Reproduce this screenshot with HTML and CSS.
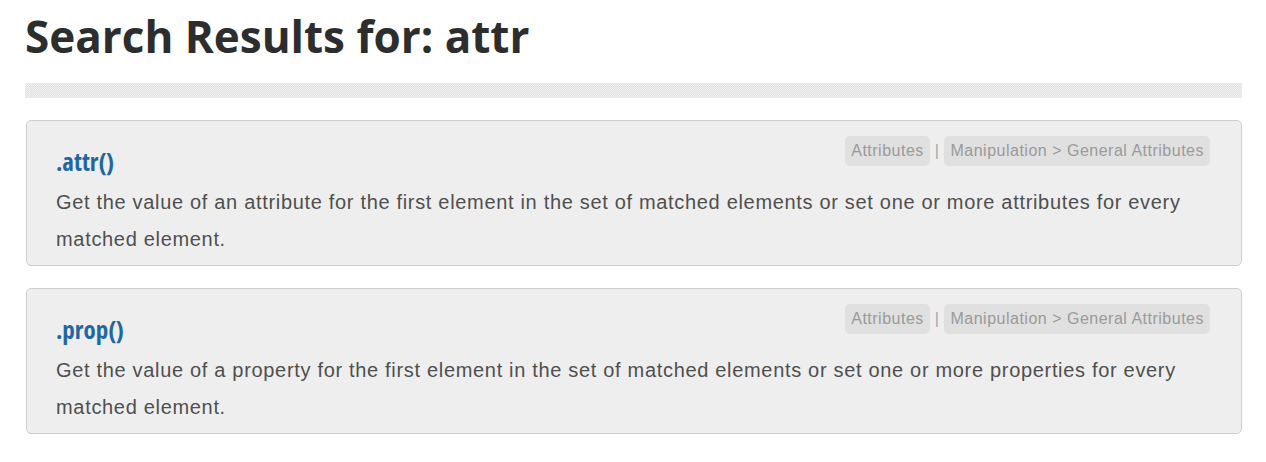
FILE: index.html
```html
<!DOCTYPE html>
<html>
<head>
<meta charset="utf-8">
<link rel="stylesheet" href="styles.css">
</head>
<body>
<div class="page">
  <h1 class="page-title">Search Results for: attr</h1>
  <div class="stripe"></div>
  <article class="entry">
    <div class="entry-head">
      <h2 class="entry-title"><a href="#">.attr()</a></h2>
      <div class="tags">
        <span class="tag">Attributes</span>
        <span class="sep">|</span>
        <span class="tag">Manipulation &gt; General Attributes</span>
      </div>
    </div>
    <p class="entry-desc">Get the value of an attribute for the first element in the set of matched elements or set one or more attributes for every matched element.</p>
  </article>
  <article class="entry">
    <div class="entry-head">
      <h2 class="entry-title"><a href="#">.prop()</a></h2>
      <div class="tags">
        <span class="tag">Attributes</span>
        <span class="sep">|</span>
        <span class="tag">Manipulation &gt; General Attributes</span>
      </div>
    </div>
    <p class="entry-desc">Get the value of a property for the first element in the set of matched elements or set one or more properties for every matched element.</p>
  </article>
</div>
</body>
</html>
```
FILE: styles.css
```css
html, body {
  margin: 0;
  padding: 0;
  background: #fff;
}
.page {
  padding: 10px 24px 0 25px;
  font-family: "Liberation Sans", Arial, sans-serif;
}
.page-title {
  margin: 0;
  font-family: "Open Sans", sans-serif;
  font-stretch: 96%;
  font-weight: 700;
  font-size: 44px;
  line-height: 52px;
  color: #2d2d2d;
}
.stripe {
  margin-top: 21px;
  height: 15px;
  background: repeating-conic-gradient(#e0e0e0 0 25%, #f2f2f2 0 50%) 0 0 / 2px 2px;
}
.entry {
  margin: 22px 0 0 1px;
  background: #eeeeee;
  border: 1px solid #cfcfcf;
  border-radius: 5px;
  padding: 15px 31px 7px 29px;
}
.entry + .entry {
  margin-top: 22px;
}
.entry-head {
  display: flex;
  justify-content: space-between;
  align-items: flex-start;
}
.entry-title {
  margin: 10px 0 0;
  font-family: "Open Sans", sans-serif;
  font-stretch: 80%;
  font-weight: 700;
  font-size: 25px;
  line-height: 30px;
}
.entry-title a {
  color: #1e67a3;
  text-decoration: none;
}
.tags {
  display: flex;
  align-items: center;
  gap: 4px;
  font-size: 16px;
  letter-spacing: 0.5px;
  color: #9a9a9a;
}
.tag {
  background: #e0e0e0;
  border-radius: 5px;
  padding: 7px 6px;
  line-height: 16px;
}
.sep {
  color: #a8a8a8;
  padding: 0 1px;
}
.entry-desc {
  margin: 8px 0 0;
  font-size: 20px;
  letter-spacing: 0.68px;
  line-height: 37px;
  color: #4f4f4f;
}
```
